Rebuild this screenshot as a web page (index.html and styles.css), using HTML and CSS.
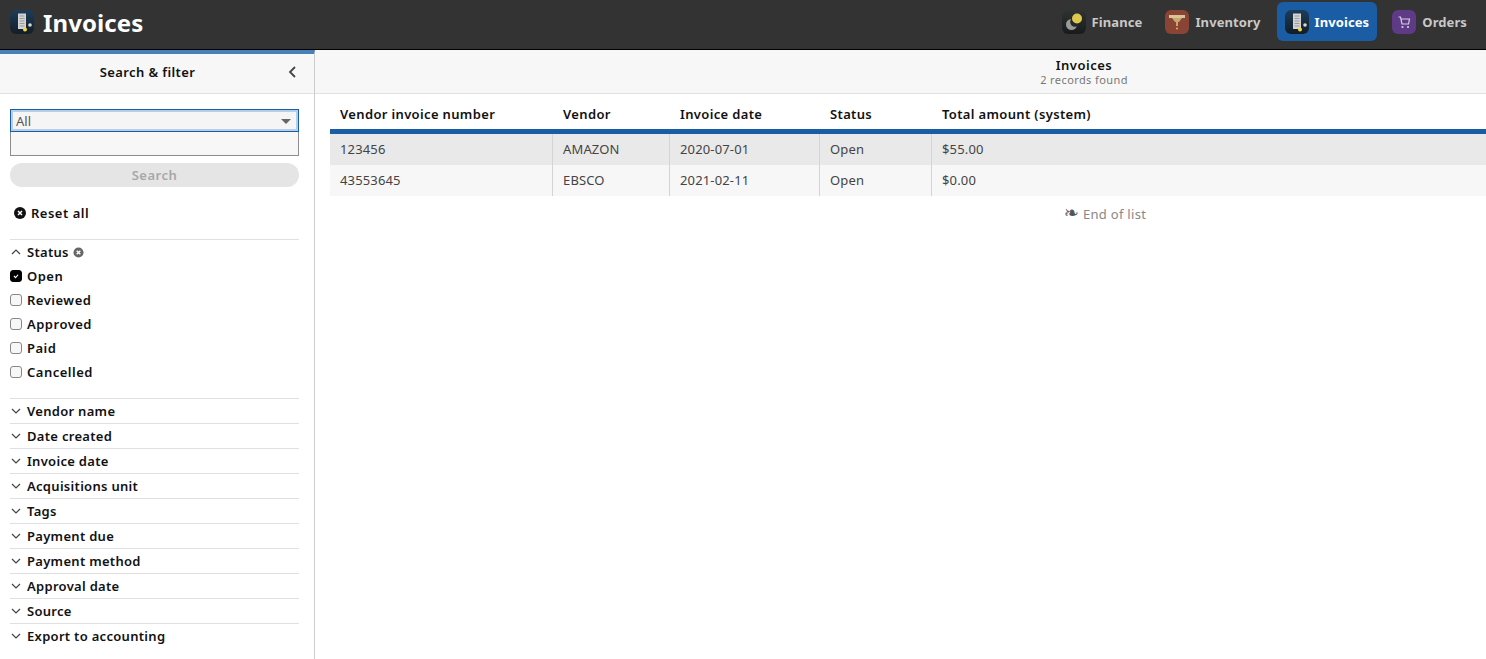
FILE: index.html
```html
<!DOCTYPE html>
<html lang="en">
<head>
  <meta charset="UTF-8" />
  <title>Invoices</title>
  <link rel="stylesheet" href="styles.css">
</head>
<body>
<svg class="defs" width="0" height="0">
  <defs>
    <linearGradient id="darkGrad" x1="0" y1="0" x2="0" y2="1">
      <stop offset="0" stop-color="#1d3d5a"/>
      <stop offset="1" stop-color="#131d26"/>
    </linearGradient>
    <linearGradient id="finGrad" x1="0" y1="0" x2="0" y2="1">
      <stop offset="0" stop-color="#303333"/>
      <stop offset="1" stop-color="#181b1d"/>
    </linearGradient>
    <symbol id="invoiceIcon" viewBox="0 0 24 24">
      <rect width="24" height="24" rx="6" fill="url(#darkGrad)"/>
      <path d="M8 3.500h8v15.500H8z" fill="#d4d4d4"/>
      <path d="M9.500 6h5M9.500 8.500h5M9.500 11h5M9.500 13.500h5M9.500 16h5" stroke="#9a9a9a" stroke-width="1"/>
      <circle cx="15" cy="19.500" r="2" fill="#f5d93c"/>
      <circle cx="20" cy="15" r="1.800" fill="#d8d8d8"/>
    </symbol>
  </defs>
</svg>

<header class="topbar">
  <div class="app-title">
    <svg class="app-icon"><use href="#invoiceIcon"/></svg>
    <span>Invoices</span>
  </div>
  <nav class="app-nav">
    <a class="nav-item">
      <svg class="app-icon" viewBox="0 0 24 24">
        <rect width="24" height="24" rx="6" fill="url(#finGrad)"/>
        <circle cx="9.500" cy="14.500" r="5.500" fill="#9a9a96"/>
        <circle cx="13" cy="12" r="4.800" fill="#262829"/>
        <circle cx="15" cy="8.500" r="5" fill="#dcc94e"/>
      </svg>
      <span>Finance</span>
    </a>
    <a class="nav-item">
      <svg class="app-icon" viewBox="0 0 24 24">
        <rect width="24" height="24" rx="6" fill="#8a4436"/>
        <path d="M4 5h16v3H4z" fill="#d8c49a"/>
        <path d="M7 8h10l-3 4h-4z" fill="#c9a76c"/>
        <path d="M11 12h2v4h-2z" fill="#c9a76c"/>
        <circle cx="12" cy="18.500" r="1" fill="#e0b84c"/>
      </svg>
      <span>Inventory</span>
    </a>
    <a class="nav-item active">
      <svg class="app-icon"><use href="#invoiceIcon"/></svg>
      <span>Invoices</span>
    </a>
    <a class="nav-item">
      <svg class="app-icon" viewBox="0 0 24 24">
        <rect width="24" height="24" rx="6" fill="#5f3a87"/>
        <path d="M6.500 7h2l1.500 7h6.500l1-5H9" fill="none" stroke="#d9cfe3" stroke-width="1.200"/>
        <circle cx="10.500" cy="17" r="1.100" fill="#d9cfe3"/>
        <circle cx="16" cy="17" r="1.100" fill="#d9cfe3"/>
      </svg>
      <span>Orders</span>
    </a>
  </nav>
</header>

<div class="layout">
  <aside class="sidebar">
    <div class="pane-head filter-head">
      <span>Search &amp; filter</span>
      <svg class="collapse" viewBox="0 0 10 14"><path d="M8 2 3 7l5 5" fill="none" stroke="#444" stroke-width="1.800"/></svg>
    </div>
    <div class="filters">
      <div class="select-box">
        <span>All</span>
        <i class="caret"></i>
      </div>
      <div class="search-box"></div>
      <button class="search-btn">Search</button>
      <div class="reset-all">
        <svg class="x-icon" viewBox="0 0 12 12">
          <circle cx="6" cy="6" r="6" fill="#111"/>
          <path d="m4 4 4 4m0-4-4 4" stroke="#fff" stroke-width="1.500"/>
        </svg>
        <span>Reset all</span>
      </div>

      <section class="acc acc-open">
        <div class="acc-head">
          <svg class="chev" viewBox="0 0 10 6"><path d="m1 5 4-4 4 4" fill="none" stroke="#444" stroke-width="1.200"/></svg>
          <span>Status</span>
          <svg class="x-small" viewBox="0 0 12 12">
            <circle cx="6" cy="6" r="5.500" fill="#666"/>
            <path d="m4 4 4 4m0-4-4 4" stroke="#fff" stroke-width="1.500"/>
          </svg>
        </div>
        <label class="check"><i class="box on"><svg viewBox="0 0 12 12"><path d="m3.500 6 2 2 3-3.500" fill="none" stroke="#fff" stroke-width="1.300"/></svg></i>Open</label>
        <label class="check"><i class="box"></i>Reviewed</label>
        <label class="check"><i class="box"></i>Approved</label>
        <label class="check"><i class="box"></i>Paid</label>
        <label class="check"><i class="box"></i>Cancelled</label>
      </section>

      <section class="acc"><div class="acc-head"><svg class="chev" viewBox="0 0 10 6"><path d="m1 1 4 4 4-4" fill="none" stroke="#444" stroke-width="1.200"/></svg><span>Vendor name</span></div></section>
      <section class="acc"><div class="acc-head"><svg class="chev" viewBox="0 0 10 6"><path d="m1 1 4 4 4-4" fill="none" stroke="#444" stroke-width="1.200"/></svg><span>Date created</span></div></section>
      <section class="acc"><div class="acc-head"><svg class="chev" viewBox="0 0 10 6"><path d="m1 1 4 4 4-4" fill="none" stroke="#444" stroke-width="1.200"/></svg><span>Invoice date</span></div></section>
      <section class="acc"><div class="acc-head"><svg class="chev" viewBox="0 0 10 6"><path d="m1 1 4 4 4-4" fill="none" stroke="#444" stroke-width="1.200"/></svg><span>Acquisitions unit</span></div></section>
      <section class="acc"><div class="acc-head"><svg class="chev" viewBox="0 0 10 6"><path d="m1 1 4 4 4-4" fill="none" stroke="#444" stroke-width="1.200"/></svg><span>Tags</span></div></section>
      <section class="acc"><div class="acc-head"><svg class="chev" viewBox="0 0 10 6"><path d="m1 1 4 4 4-4" fill="none" stroke="#444" stroke-width="1.200"/></svg><span>Payment due</span></div></section>
      <section class="acc"><div class="acc-head"><svg class="chev" viewBox="0 0 10 6"><path d="m1 1 4 4 4-4" fill="none" stroke="#444" stroke-width="1.200"/></svg><span>Payment method</span></div></section>
      <section class="acc"><div class="acc-head"><svg class="chev" viewBox="0 0 10 6"><path d="m1 1 4 4 4-4" fill="none" stroke="#444" stroke-width="1.200"/></svg><span>Approval date</span></div></section>
      <section class="acc"><div class="acc-head"><svg class="chev" viewBox="0 0 10 6"><path d="m1 1 4 4 4-4" fill="none" stroke="#444" stroke-width="1.200"/></svg><span>Source</span></div></section>
      <section class="acc"><div class="acc-head"><svg class="chev" viewBox="0 0 10 6"><path d="m1 1 4 4 4-4" fill="none" stroke="#444" stroke-width="1.200"/></svg><span>Export to accounting</span></div></section>
    </div>
  </aside>

  <main class="results">
    <div class="pane-head results-head">
      <div class="results-title">Invoices</div>
      <div class="results-count">2 records found</div>
    </div>
    <div class="list">
      <div class="row row-head">
        <div class="cell c1">Vendor invoice number</div>
        <div class="cell c2">Vendor</div>
        <div class="cell c3">Invoice date</div>
        <div class="cell c4">Status</div>
        <div class="cell c5">Total amount (system)</div>
      </div>
      <div class="row row-data odd">
        <div class="cell c1">123456</div>
        <div class="cell c2">AMAZON</div>
        <div class="cell c3">2020-07-01</div>
        <div class="cell c4">Open</div>
        <div class="cell c5">$55.00</div>
      </div>
      <div class="row row-data">
        <div class="cell c1">43553645</div>
        <div class="cell c2">EBSCO</div>
        <div class="cell c3">2021-02-11</div>
        <div class="cell c4">Open</div>
        <div class="cell c5">$0.00</div>
      </div>
      <div class="end-list"><span class="leaf">❧</span> End of list</div>
    </div>
  </main>
</div>
</body>
</html>
```

FILE: styles.css
```css
* {
  box-sizing: border-box;
}
html, body {
  height: 100%;
}
body {
  margin: 0;
  height: 659px;
  overflow: hidden;
  font-family: "Noto Sans", "Open Sans", sans-serif;
  font-size: 13px;
  color: #111;
  background: #fff;
  display: flex;
  flex-direction: column;
}
.defs {
  position: absolute;
}

/* top bar */
.topbar {
  height: 50px;
  flex: none;
  background: #333;
  border-bottom: 1px solid #000;
  display: flex;
  align-items: flex-start;
  justify-content: space-between;
  padding: 2px 11px 0 10px;
}
.app-icon {
  width: 24px;
  height: 24px;
  flex: none;
}
.app-title {
  display: flex;
  align-items: center;
  gap: 9px;
  height: 40px;
  color: #fff;
  font-size: 24px;
  font-weight: 700;
  letter-spacing: 0.1px;
}
.app-nav {
  display: flex;
}
.nav-item {
  display: flex;
  align-items: center;
  gap: 6px;
  height: 39px;
  padding: 0 8px 0 7px;
  margin-left: 8px;
  border-radius: 6px;
  color: #c8c8c8;
  font-size: 13px;
  font-weight: 700;
  letter-spacing: 0.1px;
}
.nav-item.active {
  background: #1a5da4;
  color: #fff;
  padding-left: 8px;
}

/* panes */
.layout {
  flex: 1;
  display: flex;
  min-height: 0;
}
.sidebar {
  width: 315px;
  flex: none;
  border-right: 1px solid #ccc;
  border-top: 4px solid #4a80b8;
}
.pane-head {
  background: #f7f7f7;
  border-bottom: 1px solid #e0e0e0;
}
.filter-head {
  height: 40px;
  display: flex;
  align-items: center;
  justify-content: center;
  padding: 0 19px 4px 0;
  font-weight: 600;
  letter-spacing: 0.4px;
  position: relative;
}
.collapse {
  position: absolute;
  right: 17px;
  top: 11px;
  width: 10px;
  height: 14px;
}
.filters {
  padding: 15px 15px 0 10px;
}
.select-box {
  height: 23px;
  border: 1px solid #1a5da4;
  background: #f5f5f5;
  box-shadow: inset 0 0 0 2px #b5cfe8;
  display: flex;
  align-items: center;
  justify-content: space-between;
  padding: 0 7px 0 5px;
  color: #555;
  font-size: 13px;
}
.caret {
  width: 0;
  height: 0;
  border-left: 5px solid transparent;
  border-right: 5px solid transparent;
  border-top: 5px solid #666;
  margin-top: 2px;
}
.search-box {
  height: 24px;
  border: 1px solid #8c8c8c;
  border-top: none;
  background: #f7f7f7;
}
.search-btn {
  display: block;
  width: 100%;
  height: 24px;
  margin-top: 7px;
  border: none;
  border-radius: 12px;
  background: #e5e5e5;
  color: #a8a8a8;
  font-family: inherit;
  font-size: 13px;
  font-weight: 600;
  letter-spacing: 0.5px;
}
.reset-all {
  display: flex;
  align-items: center;
  gap: 5px;
  height: 20px;
  margin: 16px 0 16px 4px;
  font-weight: 600;
  letter-spacing: 0.5px;
}
.x-icon {
  width: 12px;
  height: 12px;
}

/* filter accordions */
.acc {
  border-top: 1px solid #e0e0e0;
}
.acc-head {
  height: 24px;
  display: flex;
  align-items: center;
  font-weight: 600;
  letter-spacing: 0.3px;
}
.chev {
  width: 10px;
  height: 6px;
  margin: 0 6px 0 1px;
}
.acc-open {
  padding-bottom: 14px;
}
.x-small {
  width: 11px;
  height: 11px;
  margin-left: 4px;
}
.check {
  display: flex;
  align-items: center;
  height: 24px;
  font-weight: 600;
  letter-spacing: 0.5px;
}
.box {
  width: 12px;
  height: 12px;
  border: 1px solid #888;
  border-radius: 3px;
  background: #f7f7f7;
  margin-right: 5px;
  flex: none;
  display: block;
}
.box.on {
  background: #000;
  border-color: #000;
}
.box svg {
  display: block;
  width: 10px;
  height: 10px;
}

/* results */
.results {
  flex: 1;
  min-width: 0;
}
.results-head {
  height: 44px;
  padding: 8px 0 0 367px;
  text-align: center;
}
.results-title {
  font-weight: 600;
  letter-spacing: 0.5px;
  line-height: 15px;
}
.results-count {
  font-size: 11px;
  line-height: 14px;
  color: #777;
  letter-spacing: 0.4px;
}
.list {
  padding-left: 15px;
}
.row {
  display: flex;
}
.cell {
  padding-left: 10px;
  flex: none;
}
.c1 { width: 223px; }
.c2 { width: 117px; }
.c3 { width: 150px; }
.c4 { width: 112px; }
.c5 { flex: 1; }
.row-head {
  height: 40px;
  align-items: center;
  border-bottom: 5px solid #1a5da4;
  font-weight: 600;
  letter-spacing: 0.35px;
  padding-top: 5px;
}
.row-data {
  height: 31px;
  background: #f7f7f7;
  color: #444;
  letter-spacing: 0.15px;
}
.row-data.odd {
  background: #e9e9e9;
}
.row-data .cell {
  line-height: 31px;
  border-right: 1px solid #d4d4d4;
}
.row-data .c5 {
  border-right: none;
}
.end-list {
  padding: 9px 0 0 394px;
  text-align: center;
  color: #888;
  letter-spacing: 0.3px;
}
.leaf {
  color: #555;
  font-size: 18px;
  line-height: 13px;
  font-family: "DejaVu Sans", sans-serif;
}
```
